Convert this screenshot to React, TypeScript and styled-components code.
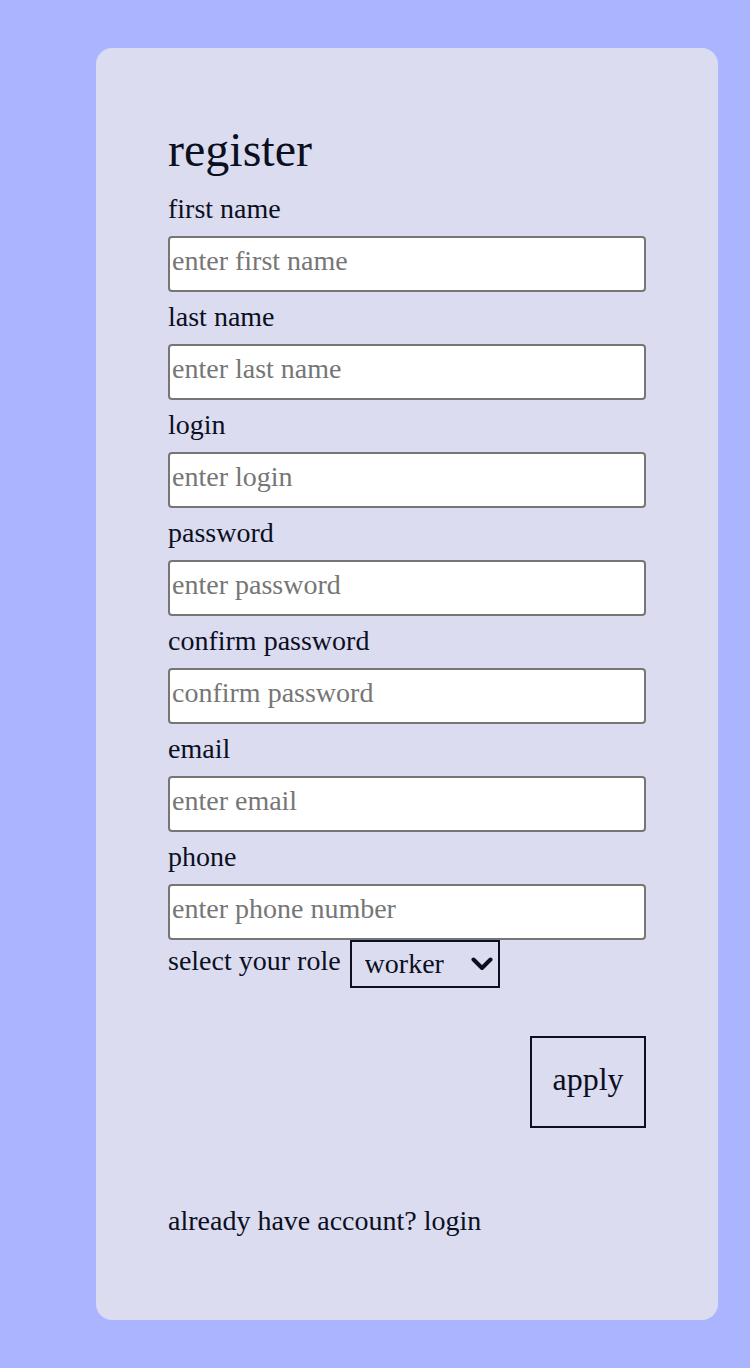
import styled, { createGlobalStyle } from 'styled-components';

const GlobalStyle = createGlobalStyle`
  html, body {
    margin: 0;
    padding: 0;
    background: #abb4ff;
  }
  body {
    font-family: "Liberation Serif", "Times New Roman", serif;
    color: #0b0f1e;
  }
`;

const fields = [
  { label: 'first name', placeholder: 'enter first name', type: 'text' },
  { label: 'last name', placeholder: 'enter last name', type: 'text' },
  { label: 'login', placeholder: 'enter login', type: 'text' },
  { label: 'password', placeholder: 'enter password', type: 'password' },
  { label: 'confirm password', placeholder: 'confirm password', type: 'password' },
  { label: 'email', placeholder: 'enter email', type: 'email' },
  { label: 'phone', placeholder: 'enter phone number', type: 'tel' },
];

function App() {
  return (
    <Page>
      <GlobalStyle />
      <Card>
        <Title>register</Title>
        {fields.map((f) => (
          <Field key={f.label}>
            <Label>{f.label}</Label>
            <Input type={f.type} placeholder={f.placeholder} />
          </Field>
        ))}
        <RoleRow>
          <RoleLabel>select your role</RoleLabel>
          <SelectWrap>
            <Select defaultValue="worker">
              <option value="worker">worker</option>
              <option value="employer">employer</option>
            </Select>
            <Chevron width="22" height="14" viewBox="0 0 22 14" aria-hidden="true">
              <path d="M2.5 2.5 L11 11 L19.5 2.5" fill="none" stroke="#0b0f1e" strokeWidth="4" strokeLinecap="round" strokeLinejoin="round" />
            </Chevron>
          </SelectWrap>
        </RoleRow>
        <Actions>
          <ApplyButton type="button">apply</ApplyButton>
        </Actions>
        <Footer>already have account? login</Footer>
      </Card>
    </Page>
  );
}

const Page = styled.div`
  min-height: 1368px;
  box-sizing: border-box;
  padding: 48px 32px 48px 96px;
`;

const Card = styled.div`
  width: 622px;
  box-sizing: border-box;
  padding: 74px 72px 83px;
  background: #dbdcf0;
  border-radius: 16px;
  display: flex;
  flex-direction: column;
`;

const Title = styled.h1`
  margin: 0 0 7px;
  font-size: 48px;
  font-weight: 400;
  line-height: 55px;
`;

const Field = styled.div`
  display: flex;
  flex-direction: column;
`;

const Label = styled.label`
  display: block;
  margin: 9px 0 11px;
  font-size: 28px;
  line-height: 32px;
`;

const Input = styled.input`
  box-sizing: border-box;
  width: 478px;
  height: 56px;
  margin: 0;
  padding: 0 2px 6px;
  border: 2px solid #767676;
  border-radius: 4px;
  background: #fff;
  font-family: "Liberation Serif", "Times New Roman", serif;
  font-size: 28px;
  color: #0b0f1e;
  outline: none;

  &::placeholder {
    color: #767676;
  }
`;

const RoleRow = styled.div`
  display: flex;
  align-items: flex-start;
  gap: 9px;
`;

const RoleLabel = styled.span`
  font-size: 28px;
  line-height: 32px;
  margin-top: 5px;
`;

const SelectWrap = styled.div`
  position: relative;
  width: 150px;
  height: 48px;
`;

const Select = styled.select`
  appearance: none;
  box-sizing: border-box;
  width: 150px;
  height: 48px;
  margin: 0;
  padding: 0 36px 2px 13px;
  border: 2px solid #0b0f1e;
  border-radius: 0;
  background: transparent;
  font-family: "Liberation Serif", "Times New Roman", serif;
  font-size: 28px;
  color: #0b0f1e;
`;

const Chevron = styled.svg`
  position: absolute;
  right: 7px;
  top: 17px;
  pointer-events: none;
`;

const Actions = styled.div`
  display: flex;
  justify-content: flex-end;
  margin-top: 48px;
`;

const ApplyButton = styled.button`
  box-sizing: border-box;
  width: 116px;
  height: 92px;
  padding: 0 0 6px;
  border: 2px solid #0b0f1e;
  background: transparent;
  font-family: "Liberation Serif", "Times New Roman", serif;
  font-size: 32px;
  color: #0b0f1e;
  cursor: pointer;
`;

const Footer = styled.p`
  margin: 77px 0 0;
  font-size: 28px;
  line-height: 32px;
`;

export default App;
